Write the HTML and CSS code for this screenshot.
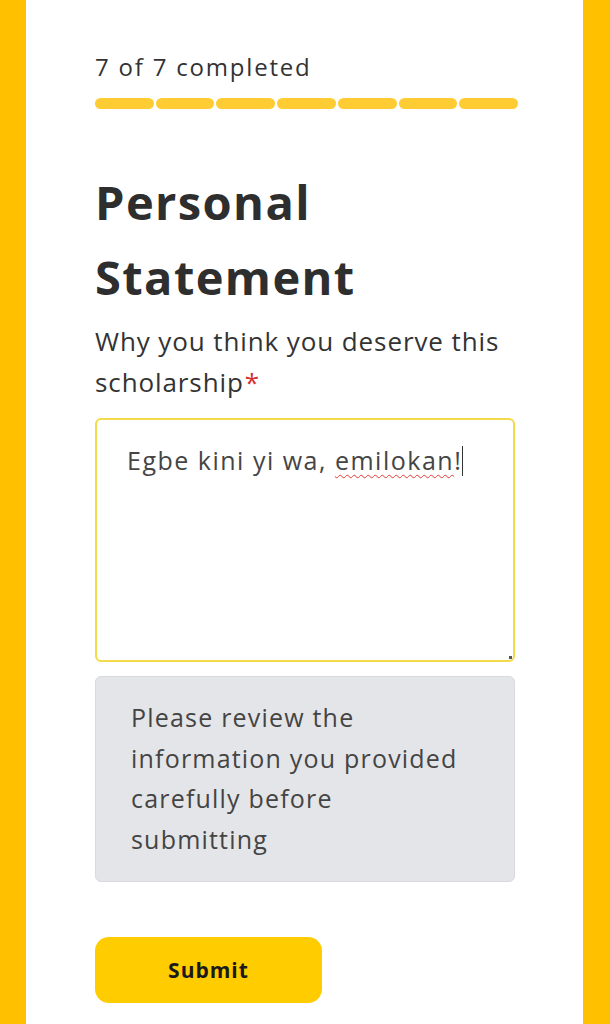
FILE: index.html
```html
<!doctype html>
<html lang="en">
<head>
    <meta charset="utf-8">
    <title>Personal Statement</title>
    <link rel="stylesheet" href="styles.css">
</head>
<body>
    <div class="page">
        <p class="progress-label">7 of 7 completed</p>
        <div class="progress">
            <span class="step"></span>
            <span class="step"></span>
            <span class="step"></span>
            <span class="step"></span>
            <span class="step"></span>
            <span class="step"></span>
            <span class="step"></span>
        </div>

        <h1 class="title">Personal Statement</h1>

        <p class="label">Why you think you deserve this scholarship<span class="req">*</span></p>

        <div class="textbox" role="textbox">Egbe kini yi wa, <span class="typo">emilokan</span>!<span class="caret"></span><span class="grip"></span></div>

        <div class="notice">
            <p>Please review the information you provided carefully before submitting</p>
        </div>

        <button class="submit">Submit</button>
    </div>
</body>
</html>
```

FILE: styles.css
```css
body {
    margin: 0;
    background: #ffc000;
    font-family: "Open Sans", "Noto Sans", sans-serif;
    color: #333;
}
.page {
    background: #fff;
    margin: 0 27px 0 26px;
    min-height: 1024px;
    padding: 52px 65px 0 69px;
    box-sizing: border-box;
}
.progress-label {
    margin: 0;
    font-size: 24px;
    line-height: 30px;
    letter-spacing: 1.8px;
    color: #333;
}
.progress {
    display: flex;
    gap: 2px;
    margin-top: 16px;
    width: 423px;
}
.step {
    flex: 1;
    height: 11px;
    border-radius: 6px;
    background: #ffcc33;
}
.title {
    margin: 56px 0 0;
    font-size: 47px;
    font-weight: 700;
    line-height: 75px;
    letter-spacing: 1.4px;
    color: #2e2e2e;
    width: 340px;
}
.label {
    margin: 6px 0 0;
    font-size: 26px;
    line-height: 41px;
    letter-spacing: 0.9px;
    color: #333;
    width: 420px;
}
.req {
    display: inline-block;
    margin-left: 1px;
    letter-spacing: 0;
    color: #d32f2f;
}
.textbox {
    position: relative;
    margin-top: 15px;
    width: 420px;
    height: 244px;
    box-sizing: border-box;
    border: 2px solid #f3da4a;
    border-radius: 6px;
    padding: 24px 30px;
    font-size: 25px;
    line-height: 32px;
    letter-spacing: 1.5px;
    color: #454545;
}
.typo {
    text-decoration: underline wavy #e53935;
    text-decoration-thickness: 1px;
    text-underline-offset: 4px;
}
.caret {
    display: inline-block;
    width: 1px;
    height: 30px;
    background: #333;
    vertical-align: -6px;
}
.grip {
    position: absolute;
    right: 1px;
    bottom: 1px;
    width: 3px;
    height: 3px;
    background: #555;
}
.notice {
    margin-top: 14px;
    width: 420px;
    height: 206px;
    box-sizing: border-box;
    background: #e4e5e8;
    border: 1px solid #d9dadd;
    border-radius: 6px;
    padding: 20px 35px;
}
.notice p {
    margin: 0;
    width: 335px;
    font-size: 25px;
    line-height: 40.5px;
    letter-spacing: 1.2px;
    color: #444;
}
.submit {
    margin-top: 55px;
    width: 227px;
    height: 66px;
    border: 0;
    border-radius: 14px;
    background: #ffcc00;
    font-family: inherit;
    font-size: 21px;
    font-weight: 700;
    letter-spacing: 1px;
    color: #1a1a1a;
}
```
